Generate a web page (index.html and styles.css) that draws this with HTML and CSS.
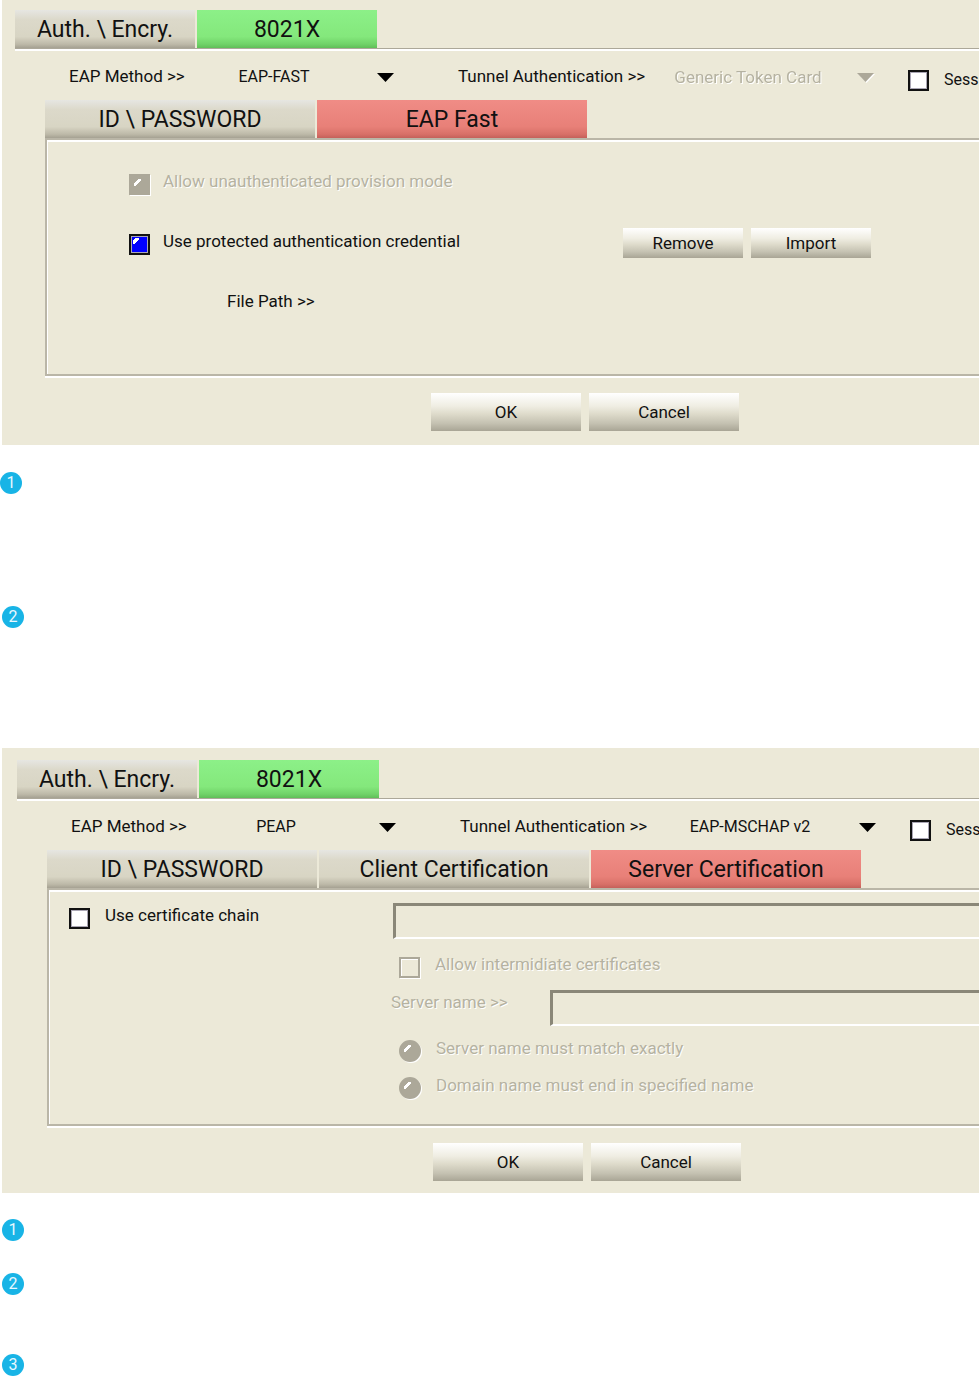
FILE: index.html
```html
<!DOCTYPE html>
<html lang="en">
<head>
<meta charset="utf-8">
<title>802.1X settings</title>
<link rel="stylesheet" href="styles.css">
</head>
<body>
<section class="panel panel-fast">
  <nav class="tabs">
    <button class="tab" type="button">Auth. \ Encry.</button>
    <button class="tab tab-green" type="button">8021X</button>
  </nav>
  <div class="methods">
    <label for="eap1">EAP Method &gt;&gt;</label>
    <span class="picker"><select id="eap1"><option>EAP-FAST</option></select></span>
    <label for="tunnel1">Tunnel Authentication &gt;&gt;</label>
    <span class="picker picker-off"><select id="tunnel1" disabled><option>Generic Token Card</option></select></span>
    <label class="check session"><input type="checkbox">Sessi</label>
  </div>
  <div class="inner">
    <nav class="tabs tabs-wide">
      <button class="tab" type="button">ID \ PASSWORD</button>
      <button class="tab tab-red" type="button">EAP Fast</button>
    </nav>
    <div class="group credentials">
      <label class="check off"><input type="checkbox" checked disabled>Allow unauthenticated provision mode</label>
      <div class="credential-row">
        <label class="check"><input type="checkbox" checked>Use protected authentication credential</label>
        <div class="file-actions">
          <button class="button" type="button">Remove</button>
          <button class="button" type="button">Import</button>
        </div>
      </div>
      <p class="path">File Path &gt;&gt;</p>
    </div>
  </div>
  <div class="actions">
    <button class="button" type="button">OK</button>
    <button class="button" type="button">Cancel</button>
  </div>
</section>

<ol class="notes notes-fast">
  <li>1</li>
  <li>2</li>
</ol>

<section class="panel panel-peap">
  <nav class="tabs">
    <button class="tab" type="button">Auth. \ Encry.</button>
    <button class="tab tab-green" type="button">8021X</button>
  </nav>
  <div class="methods">
    <label for="eap2">EAP Method &gt;&gt;</label>
    <span class="picker"><select id="eap2"><option>PEAP</option></select></span>
    <label for="tunnel2">Tunnel Authentication &gt;&gt;</label>
    <span class="picker"><select id="tunnel2"><option>EAP-MSCHAP v2</option></select></span>
    <label class="check session"><input type="checkbox">Sess</label>
  </div>
  <div class="inner">
    <nav class="tabs tabs-wide">
      <button class="tab" type="button">ID \ PASSWORD</button>
      <button class="tab" type="button">Client Certification</button>
      <button class="tab tab-red" type="button">Server Certification</button>
    </nav>
    <div class="group certificates">
      <label class="check"><input id="chain" type="checkbox">Use certificate chain</label>
      <div class="server">
        <input class="field" type="text" aria-label="Certificate" disabled>
        <label class="check off"><input type="checkbox" disabled>Allow intermidiate certificates</label>
        <div class="server-name">
          <label class="off" for="server">Server name &gt;&gt;</label>
          <input class="field" id="server" type="text" disabled>
        </div>
        <label class="check off"><input type="radio" name="match" disabled>Server name must match exactly</label>
        <label class="check off"><input type="radio" name="match" disabled>Domain name must end in specified name</label>
      </div>
    </div>
  </div>
  <div class="actions">
    <button class="button" type="button">OK</button>
    <button class="button" type="button">Cancel</button>
  </div>
</section>

<ol class="notes notes-peap">
  <li>1</li>
  <li>2</li>
  <li>3</li>
</ol>
</body>
</html>
```
FILE: styles.css
```css
* { box-sizing: border-box; }

body {
  margin: 0;
  background: #fff;
  color: #111;
  font: 17px/24px Roboto, "Liberation Sans", sans-serif;
}

button, select, input { font: inherit; color: inherit; }
button, select { border: 0; border-radius: 0; padding: 0; }

.panel {
  margin-left: 2px;
  background: #ece9d8;
  overflow: hidden;
  white-space: nowrap;
}
.panel-fast { padding: 10px 0 14px 13px; }
.panel-peap { padding: 12px 0 12px 15px; }

/* Tabs */
.tabs {
  display: flex;
  gap: 2px;
  border-bottom: 1px solid #aca899;
  box-shadow: 0 2px #fff;
}
.tab {
  width: 180px;
  height: 38px;
  padding-top: 2px;
  font-size: 23px;
  background: linear-gradient(#e6e6e2, #dcd9ca 25%, #d8d5c4 70%, #bdb9a8 90%, #a5a192);
}
.tab-green { background: linear-gradient(#8cf088, #84e87c 70%, #70d268 90%, #60be58); }
.tab-red { background: linear-gradient(#f08c86, #e88078 70%, #d87068 90%, #c4605a); }
.tabs-wide .tab { width: 270px; }

/* Method row */
.methods {
  display: grid;
  grid-template-columns: 119px 270px 198px 252px auto;
  height: 51px;
  padding: 15px 0 0 54px;
}
.picker { position: relative; width: 206px; height: 24px; }
.picker select {
  appearance: none;
  width: 100%;
  height: 26px;
  padding-right: 34px;
  background: none;
  font-size: 16px;
  text-align-last: center;
  opacity: 1;
}
.methods label + .picker:nth-child(4) { width: 218px; }
.picker::after {
  content: "";
  position: absolute;
  right: 0;
  top: 9px;
  width: 17px;
  height: 9px;
  background: #000;
  clip-path: polygon(0 0, 100% 0, 50% 100%);
  pointer-events: none;
}
.picker-off { filter: drop-shadow(1px 1px #fff); }
.picker-off select { color: #b5b2a1; font-size: 17px; }
.picker-off::after { background: #aca899; }

.off { color: #b5b2a1; text-shadow: 1px 1px #fff; }

/* Check boxes and radio buttons */
.check { display: flex; align-items: center; gap: 15px; height: 38px; }
.check input {
  appearance: none;
  flex: none;
  width: 21px;
  height: 21px;
  margin: 6px 0 0;
  border: 2px solid #111;
  background: #fff;
  box-shadow: inset 0 0 0 1px #aaa6b4;
}
.check.session { height: 32px; font-size: 16px; }
.session input { margin: 0; }
.check input:checked {
  background: linear-gradient(135deg, transparent 2px, #fff 2px, #fff 5px, transparent 5px) 2px 2px / 6px 6px no-repeat #00f;
}
.check input:disabled {
  border-color: #aca899;
  background: #ece9d8;
  box-shadow: 1px 1px #fff, inset 1px 1px #fff;
}
.check input:disabled:checked,
.check input[type="radio"]:disabled {
  background: linear-gradient(135deg, transparent 3px, #fff 3px, #fff 6px, transparent 6px) 3px 3px / 7px 7px no-repeat #aca899;
  box-shadow: 1px 1px #fff;
}
.check input[type="radio"] { width: 22px; height: 22px; border-radius: 50%; }

/* Framed groups */
.inner { padding-left: 30px; }
.inner .tabs { border: 0; box-shadow: none; }
.group {
  height: 238px;
  border: solid #bab6a7;
  border-width: 2px 0 2px 2px;
  box-shadow: inset 1px 2px #fff, 0 2px #fff;
}

.credentials { padding: 11px 0 0 82px; }
.credentials .check { height: 60px; gap: 13px; }
.credential-row { display: flex; }
.credential-row .check { width: 494px; }
.file-actions { display: flex; gap: 8px; padding-top: 17px; }
.file-actions .button { width: 120px; height: 30px; }
.path { margin: 0; padding-left: 98px; line-height: 60px; }

.certificates {
  display: grid;
  grid-template-columns: 322px 1fr;
  padding: 13px 0 0 20px;
}
.certificates > .check { height: 24px; }
.server { display: grid; grid-template-rows: 42px 45px 39px 37px 37px; }
.server .check { padding-left: 8px; }
.field {
  height: 36px;
  min-width: 0;
  margin-left: 2px;
  border: solid #8a8778;
  border-width: 3px 0 2px 3px;
  border-bottom-color: #fff;
  border-radius: 0;
  background: #ece9d8;
}
.server-name { display: grid; grid-template-columns: 157px 1fr; }

/* Buttons */
.button { background: linear-gradient(#fff, #efede2 35%, #dedbcb 55%, #c4c1b1 80%, #a9a595); }
.actions { display: flex; gap: 8px; padding: 17px 0 0 416px; }
.actions .button { width: 150px; height: 38px; }

/* Numbered notes */
.notes { display: grid; margin: 0; padding: 0 0 0 2px; list-style: none; }
.notes li {
  width: 22px;
  height: 22px;
  border-radius: 50%;
  background: #18b4e6;
  color: #e8f8ff;
  font-size: 16px;
  line-height: 22px;
  text-align: center;
}
.notes-fast { gap: 112px; padding-top: 27px; padding-bottom: 120px; }
.notes-fast li:first-child { margin-left: -2px; }
.notes-peap { padding-top: 26px; }
.notes-peap li:nth-child(2) { margin-top: 32px; }
.notes-peap li:nth-child(3) { margin-top: 59px; }
```
